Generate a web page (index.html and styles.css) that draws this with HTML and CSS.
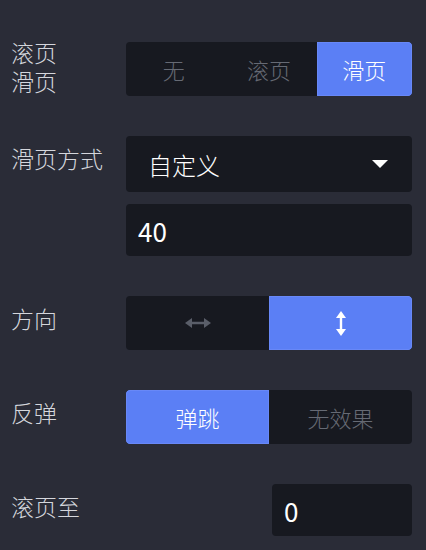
FILE: index.html
```html
<!DOCTYPE html>
<html lang="zh">
<head>
<meta charset="utf-8">
<link rel="stylesheet" href="styles.css">
</head>
<body>
<div class="panel">
  <div class="row">
    <div class="label label-multi"><div>滚页</div><div>滑页</div></div>
    <div class="controls">
      <div class="seg seg-h54">
        <div class="seg-item">无</div>
        <div class="seg-item">滚页</div>
        <div class="seg-item active">滑页</div>
      </div>
    </div>
  </div>
  <div class="row">
    <div class="label">滑页方式</div>
    <div class="controls stack">
      <div class="select">
        <span class="select-text">自定义</span>
        <span class="caret"></span>
      </div>
      <div class="input">40</div>
    </div>
  </div>
  <div class="row">
    <div class="label">方向</div>
    <div class="controls">
      <div class="seg seg-h54">
        <div class="seg-item">
          <svg width="26" height="12" viewBox="0 0 26 12" class="icon">
            <line x1="5" y1="6" x2="21" y2="6" stroke="#5a5e69" stroke-width="2.4"/>
            <polygon points="0,6 7,1 7,11" fill="#5a5e69"/>
            <polygon points="26,6 19,1 19,11" fill="#5a5e69"/>
          </svg>
        </div>
        <div class="seg-item active">
          <svg width="12" height="25" viewBox="0 0 12 25" class="icon">
            <line x1="6" y1="5" x2="6" y2="20" stroke="#ffffff" stroke-width="2.4"/>
            <polygon points="6,0 1,7 11,7" fill="#ffffff"/>
            <polygon points="6,25 1,18 11,18" fill="#ffffff"/>
          </svg>
        </div>
      </div>
    </div>
  </div>
  <div class="row">
    <div class="label">反弹</div>
    <div class="controls">
      <div class="seg seg-h54">
        <div class="seg-item active">弹跳</div>
        <div class="seg-item">无效果</div>
      </div>
    </div>
  </div>
  <div class="row">
    <div class="label">滚页至</div>
    <div class="controls end">
      <div class="input input-small">0</div>
    </div>
  </div>
</div>
</body>
</html>
```

FILE: styles.css
```css
html, body {
  margin: 0;
  padding: 0;
  background: #2a2c37;
}
body {
  font-family: "Noto Sans CJK SC", "Noto Sans", sans-serif;
  font-weight: 300;
  color: #d6d8de;
}
.panel {
  display: flex;
  flex-direction: column;
  gap: 40px;
  padding: 42px 14px 0 11px;
}
.row {
  display: flex;
  align-items: flex-start;
}
.label {
  width: 115px;
  flex: none;
  font-size: 23px;
  line-height: 29px;
  padding-top: 8px;
  color: #d4d6dc;
}
.label-multi {
  padding-top: 0;
  margin-top: -4px;
}
.controls {
  flex: 1;
  display: flex;
}
.controls.stack {
  flex-direction: column;
  gap: 12px;
}
.controls.end {
  justify-content: flex-end;
}
.seg {
  flex: 1;
  display: flex;
  background: #171920;
  border-radius: 4px;
  overflow: hidden;
}
.seg-h54 {
  height: 54px;
}
.seg-item {
  flex: 1;
  display: flex;
  align-items: center;
  justify-content: center;
  font-size: 22px;
  color: #666a74;
}
.seg-item.active {
  background: #5b7ff5;
  color: #ffffff;
  box-shadow: inset 0 0 0 1px #6888f7;
}
.seg-item:first-child.active {
  border-radius: 4px 0 0 4px;
}
.seg-item:last-child.active {
  border-radius: 0 4px 4px 0;
}
.icon {
  display: block;
}
.select {
  height: 56px;
  background: #171920;
  border-radius: 4px;
  display: flex;
  align-items: center;
  justify-content: space-between;
  padding: 0 24px 0 22px;
  box-sizing: border-box;
}
.select-text {
  font-size: 24px;
  color: #ffffff;
}
.caret {
  width: 0;
  height: 0;
  border-left: 8px solid transparent;
  border-right: 8px solid transparent;
  border-top: 8px solid #ffffff;
}
.input {
  height: 52px;
  background: #171920;
  border-radius: 4px;
  display: flex;
  align-items: center;
  padding: 0 12px;
  box-sizing: border-box;
  font-size: 26px;
  font-weight: 400;
  color: #ffffff;
}
.input-small {
  width: 140px;
}
```
